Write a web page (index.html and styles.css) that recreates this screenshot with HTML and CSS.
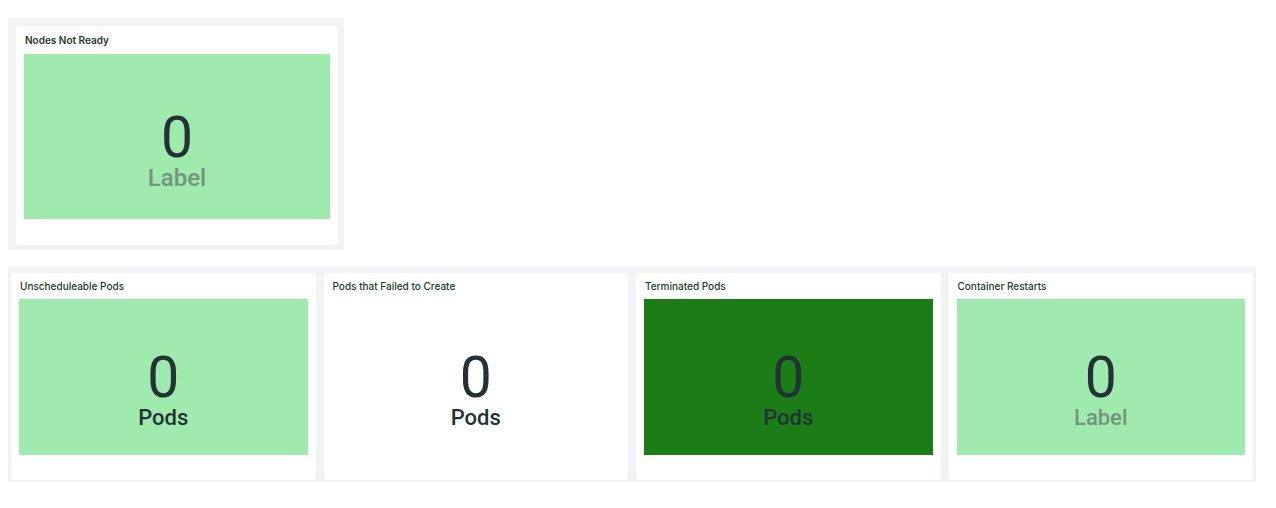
FILE: index.html
```html
<!DOCTYPE html>
<html>
<head>
<meta charset="utf-8">
<link rel="stylesheet" href="styles.css">
</head>
<body>
<div class="page">
  <section class="group group-top">
    <div class="card card-top">
      <div class="title bold">Nodes Not Ready</div>
      <div class="stat light">
        <div class="num">0</div>
        <div class="unit muted">Label</div>
      </div>
      <div class="foot"></div>
    </div>
  </section>
  <section class="group group-row">
    <div class="card">
      <div class="title">Unscheduleable Pods</div>
      <div class="stat light">
        <div class="num">0</div>
        <div class="unit">Pods</div>
      </div>
      <div class="foot"></div>
    </div>
    <div class="card">
      <div class="title">Pods that Failed to Create</div>
      <div class="stat plain">
        <div class="num">0</div>
        <div class="unit">Pods</div>
      </div>
      <div class="foot"></div>
    </div>
    <div class="card">
      <div class="title">Terminated Pods</div>
      <div class="stat dark">
        <div class="num">0</div>
        <div class="unit">Pods</div>
      </div>
      <div class="foot"></div>
    </div>
    <div class="card">
      <div class="title">Container Restarts</div>
      <div class="stat light">
        <div class="num">0</div>
        <div class="unit muted">Label</div>
      </div>
      <div class="foot"></div>
    </div>
  </section>
</div>
</body>
</html>
```

FILE: styles.css
```css
* { box-sizing: border-box; }
html, body { margin: 0; padding: 0; background: #ffffff; }
body { font-family: Roboto, "Liberation Sans", sans-serif; color: #243238; }
.page { padding: 18px 20px 0 8px; display: flex; flex-direction: column; gap: 17px; }
.group { background: #f2f3f5; }
.group-top { width: 336px; padding: 8px 6px 5px 8px; }
.group-row { width: 1248px; padding: 6px 3px 2px 3px; display: flex; gap: 8px; }
.card { background: #fff; border-radius: 3px; display: flex; flex-direction: column; padding: 0 8px; flex: 1 1 0; }
.card-top { height: 219px; }
.group-row .card { height: 207px; }
.title { font-family: Inter, Roboto, sans-serif; font-size: 10px; font-weight: 500; color: #1d3b2b; height: 26px; line-height: 26px; padding-left: 1px; }
.card-top .title { height: 28px; line-height: 28px; }
.title.bold { font-weight: 600; }
.stat { display: flex; flex-direction: column; align-items: center; justify-content: center; padding-top: 26px; }
.card-top .stat { height: 165px; }
.group-row .stat { height: 156px; }
.light { background: #9febad; }
.dark { background: #1b7d16; }
.plain { background: #fff; }
.num { font-size: 57px; line-height: 56px; color: #243238; }
.unit { font-size: 22px; line-height: 24px; color: #243238; font-weight: 500; }
.card-top .unit { font-size: 24px; }
.muted { color: #73957b; font-weight: 500; }
.foot { flex: 1; }
```
